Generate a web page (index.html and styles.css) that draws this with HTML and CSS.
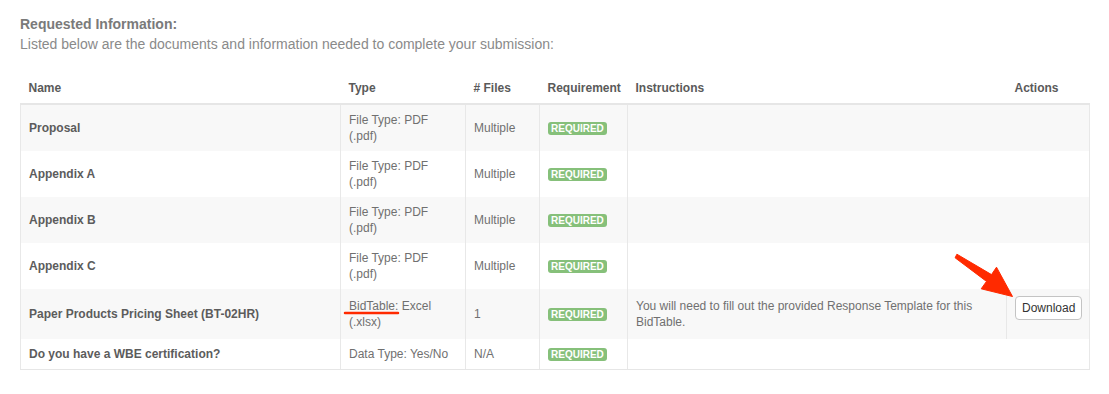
FILE: index.html
```html
<!DOCTYPE html>
<html>
<head>
<meta charset="utf-8">
<link rel="stylesheet" href="styles.css">
</head>
<body>
<div class="page">
  <h2 class="title">Requested Information:</h2>
  <p class="subtitle">Listed below are the documents and information needed to complete your submission:</p>
  <table class="req-table">
    <colgroup>
      <col class="c-name"><col class="c-type"><col class="c-files"><col class="c-req"><col class="c-instr"><col class="c-act">
    </colgroup>
    <thead>
      <tr><th>Name</th><th>Type</th><th># Files</th><th>Requirement</th><th>Instructions</th><th>Actions</th></tr>
    </thead>
    <tbody>
      <tr><td class="name">Proposal</td><td>File Type: PDF (.pdf)</td><td>Multiple</td><td><span class="badge">REQUIRED</span></td><td colspan="2"></td></tr>
      <tr><td class="name">Appendix A</td><td>File Type: PDF (.pdf)</td><td>Multiple</td><td><span class="badge">REQUIRED</span></td><td colspan="2"></td></tr>
      <tr><td class="name">Appendix B</td><td>File Type: PDF (.pdf)</td><td>Multiple</td><td><span class="badge">REQUIRED</span></td><td colspan="2"></td></tr>
      <tr><td class="name">Appendix C</td><td>File Type: PDF (.pdf)</td><td>Multiple</td><td><span class="badge">REQUIRED</span></td><td colspan="2"></td></tr>
      <tr><td class="name">Paper Products Pricing Sheet (BT-02HR)</td><td>BidTable: Excel (.xlsx)</td><td>1</td><td><span class="badge">REQUIRED</span></td><td>You will need to fill out the provided Response Template for this BidTable.</td><td class="act"><button class="btn">Download</button></td></tr>
      <tr><td class="name">Do you have a WBE certification?</td><td>Data Type: Yes/No</td><td>N/A</td><td><span class="badge">REQUIRED</span></td><td colspan="2"></td></tr>
    </tbody>
  </table>
  <svg class="annot" width="1109" height="394" viewBox="0 0 1109 394" xmlns="http://www.w3.org/2000/svg">
    <line x1="345" y1="313" x2="398" y2="313" stroke="#ff2a00" stroke-width="2.5" stroke-linecap="round"/>
    <polygon points="956.9,254.2 991.5,274.6 996.5,267.2 1012.5,296.5 981.2,288.8 986.5,281.4 955.1,257.8" fill="#ff2a00" stroke="#ff2a00" stroke-width="1" stroke-linejoin="round"/>
  </svg>
</div>
</body>
</html>
```

FILE: styles.css
```css
html, body {
  margin: 0;
  padding: 0;
  background: #fff;
}
body {
  font-family: "Liberation Sans", Arial, Helvetica, sans-serif;
  color: #6b6b6b;
}
.page {
  position: relative;
  padding: 14px 20px 20px 20px;
  width: 1069px;
}
.title {
  margin: 0;
  font-size: 14px;
  line-height: 20px;
  font-weight: bold;
  color: #7a7a7a;
}
.subtitle {
  margin: 0 0 18px 0;
  font-size: 14px;
  line-height: 20px;
  color: #8a8a8a;
}
.req-table {
  width: 1069px;
  border-collapse: collapse;
  table-layout: fixed;
  font-size: 12px;
  line-height: 16px;
}
.c-name { width: 320px; }
.c-type { width: 125px; }
.c-files { width: 74px; }
.c-req { width: 88px; }
.c-instr { width: 379px; }
.c-act { width: 83px; }
.req-table th {
  text-align: left;
  font-weight: bold;
  color: #5a5a5a;
  padding: 8px 7px 7px 8px;
  border-bottom: 2px solid #e6e6e6;
  vertical-align: bottom;
}
.req-table td {
  padding: 7px 8px;
  vertical-align: middle;
  border-left: 1px solid #e8e8e8;
  border-right: 1px solid #e8e8e8;
  color: #707070;
}
.req-table td.act {
  vertical-align: top;
}
.req-table tbody tr:last-child td {
  border-bottom: 1px solid #e6e6e6;
}
.req-table tbody tr:nth-child(odd) td {
  background: #f8f8f8;
}
.req-table td.name {
  font-weight: bold;
  color: #5c5c5c;
}
.badge {
  display: inline-block;
  background: #86c07a;
  color: #fff;
  font-size: 10px;
  font-weight: bold;
  line-height: 12px;
  padding: 1px 3px 0 3px;
  border-radius: 3px;
  vertical-align: middle;
}
.btn {
  display: block;
  margin: 0 0 12px 0;
  height: 24px;
  padding: 0 6px;
  font-family: "Liberation Sans", Arial, sans-serif;
  font-size: 12px;
  color: #333;
  background: #fff;
  border: 1px solid #c4c4c4;
  border-radius: 4px;
}
.annot {
  position: absolute;
  left: 0;
  top: 0;
  pointer-events: none;
}
```
